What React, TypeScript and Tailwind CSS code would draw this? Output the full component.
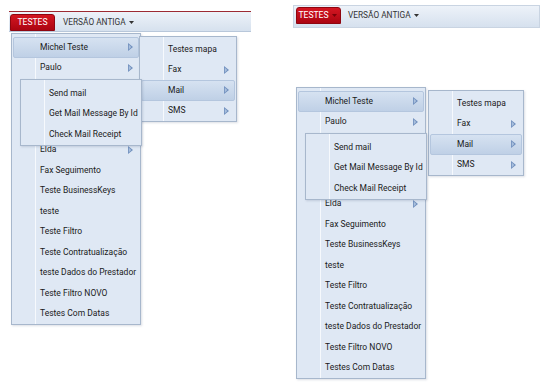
import React from "react";

type ItemProps = { label?: string; arrow?: boolean; active?: boolean };

function Arrow() {
  return (
    <svg width="5" height="8" viewBox="0 0 5 8" className="shrink-0">
      <path d="M0 0 L5 4 L0 8 Z" fill="#7291be" />
      <path d="M0.8 1.6 L3.2 4 L0.8 6.4 Z" fill="#a9c0de" />
    </svg>
  );
}

function Item({ label, arrow, active }: ItemProps) {
  return (
    <div
      className={
        active
          ? "mx-[1px] flex h-[20.5px] items-center rounded-[2px] border border-[#b4c6de] bg-gradient-to-b from-[#d6e2f1] to-[#bfd0e6] pl-[26px] pr-[5px]"
          : "mx-[1px] flex h-[20.5px] items-center border border-transparent pl-[26px] pr-[5px]"
      }
    >
      <span className="flex-1 whitespace-nowrap">{label}</span>
      {arrow && <Arrow />}
    </div>
  );
}

function Menu({
  className,
  children,
}: {
  className: string;
  children: React.ReactNode;
}) {
  return (
    <div
      className={
        "absolute flex flex-col border border-[#a7b7cc] bg-[linear-gradient(to_right,#dfe8f4_23px,#f6f9fd_23px,#f6f9fd_24px,#dfe8f4_24px)] shadow-[1px_1px_2px_rgba(60,80,110,0.18)] " +
        className
      }
    >
      {children}
    </div>
  );
}

function Caret({ color }: { color: string }) {
  return (
    <svg width="5" height="3" viewBox="0 0 5 3" className="ml-[3px] shrink-0">
      <path d="M0 0 L5 0 L2.5 3 Z" fill={color} />
    </svg>
  );
}

function Scene({ right }: { right?: boolean }) {
  const mainItems: ItemProps[] = [
    { label: "Michel Teste", arrow: true, active: true },
    { label: "Paulo", arrow: true },
    { label: "" },
    { label: "" },
    { label: "" },
    { label: "Elda", arrow: true },
    { label: "Fax Seguimento" },
    { label: "Teste BusinessKeys" },
    { label: "teste" },
    { label: "Teste Filtro" },
    { label: "Teste Contratualização" },
    { label: "teste Dados do Prestador" },
    { label: "Teste Filtro NOVO" },
    { label: "Testes Com Datas" },
  ];
  const sub1: ItemProps[] = [
    { label: "Testes mapa" },
    { label: "Fax", arrow: true },
    { label: "Mail", arrow: true, active: true },
    { label: "SMS", arrow: true },
  ];
  const mail: ItemProps[] = [
    { label: "Send mail" },
    { label: "Get Mail Message By Id" },
    { label: "Check Mail Receipt" },
  ];

  return (
    <div
      className={
        right
          ? "absolute left-[293px] top-[5px] w-[247px]"
          : "absolute left-[9px] top-[11px] w-[242px]"
      }
    >
      {/* top bar */}
      <div
        className={
          right
            ? "flex h-[23px] items-start border border-[#c9d4e2] bg-gradient-to-b from-[#edf2f9] to-[#d6e1ee] pl-[2px] pt-[1px]"
            : "flex h-[21px] items-end border-t border-t-[#9c2a33] border-b border-b-[#b8c7da] bg-gradient-to-b from-[#edf2f9] to-[#d6e1ee] pl-[1px]"
        }
      >
        <div className="flex h-[17px] w-[45px] items-center justify-center rounded-t-[3px] border border-[#8e0610] bg-gradient-to-b from-[#d41622] to-[#ac0511] text-[8.6px] text-white">
          <span className={right ? "ml-[-2px]" : ""}>TESTES</span>
          {right && <Caret color="#7a0008" />}
        </div>
        <div
          className={
            right
              ? "ml-[7px] flex h-[17px] items-center text-[8.3px] text-[#333]"
              : "ml-[8px] flex h-[17px] items-center text-[8.3px] text-[#333]"
          }
        >
          <span>VERSÃO ANTIGA</span>
          <Caret color="#333" />
        </div>
      </div>

      {/* main menu */}
      <Menu
        className={
          right
            ? "left-[3px] top-[82px] w-[130px] pt-[3px]"
            : "left-[2px] top-[22px] w-[130px] pt-[3px]"
        }
      >
        {mainItems.map((it, i) => (
          <Item key={i} {...it} />
        ))}
      </Menu>

      {/* first submenu */}
      <Menu
        className={
          right
            ? "left-[135px] top-[85px] w-[96px] pt-[2px]"
            : "left-[130px] top-[25px] w-[98px] pt-[2px]"
        }
      >
        {sub1.map((it, i) => (
          <Item key={i} {...it} />
        ))}
      </Menu>

      {/* mail submenu */}
      <Menu
        className={
          right
            ? "left-[12px] top-[128px] w-[122px] pt-[3px]"
            : "left-[11px] top-[68px] w-[122px] pt-[3px]"
        }
      >
        {mail.map((it, i) => (
          <Item key={i} {...it} />
        ))}
      </Menu>
    </div>
  );
}

export default function App() {
  return (
    <div className="relative h-[390px] w-[540px] overflow-hidden bg-white font-[family-name:Roboto,Liberation_Sans,sans-serif] text-[8.5px] text-[#1a1a1a]">
      <Scene />
      <Scene right />
    </div>
  );
}
